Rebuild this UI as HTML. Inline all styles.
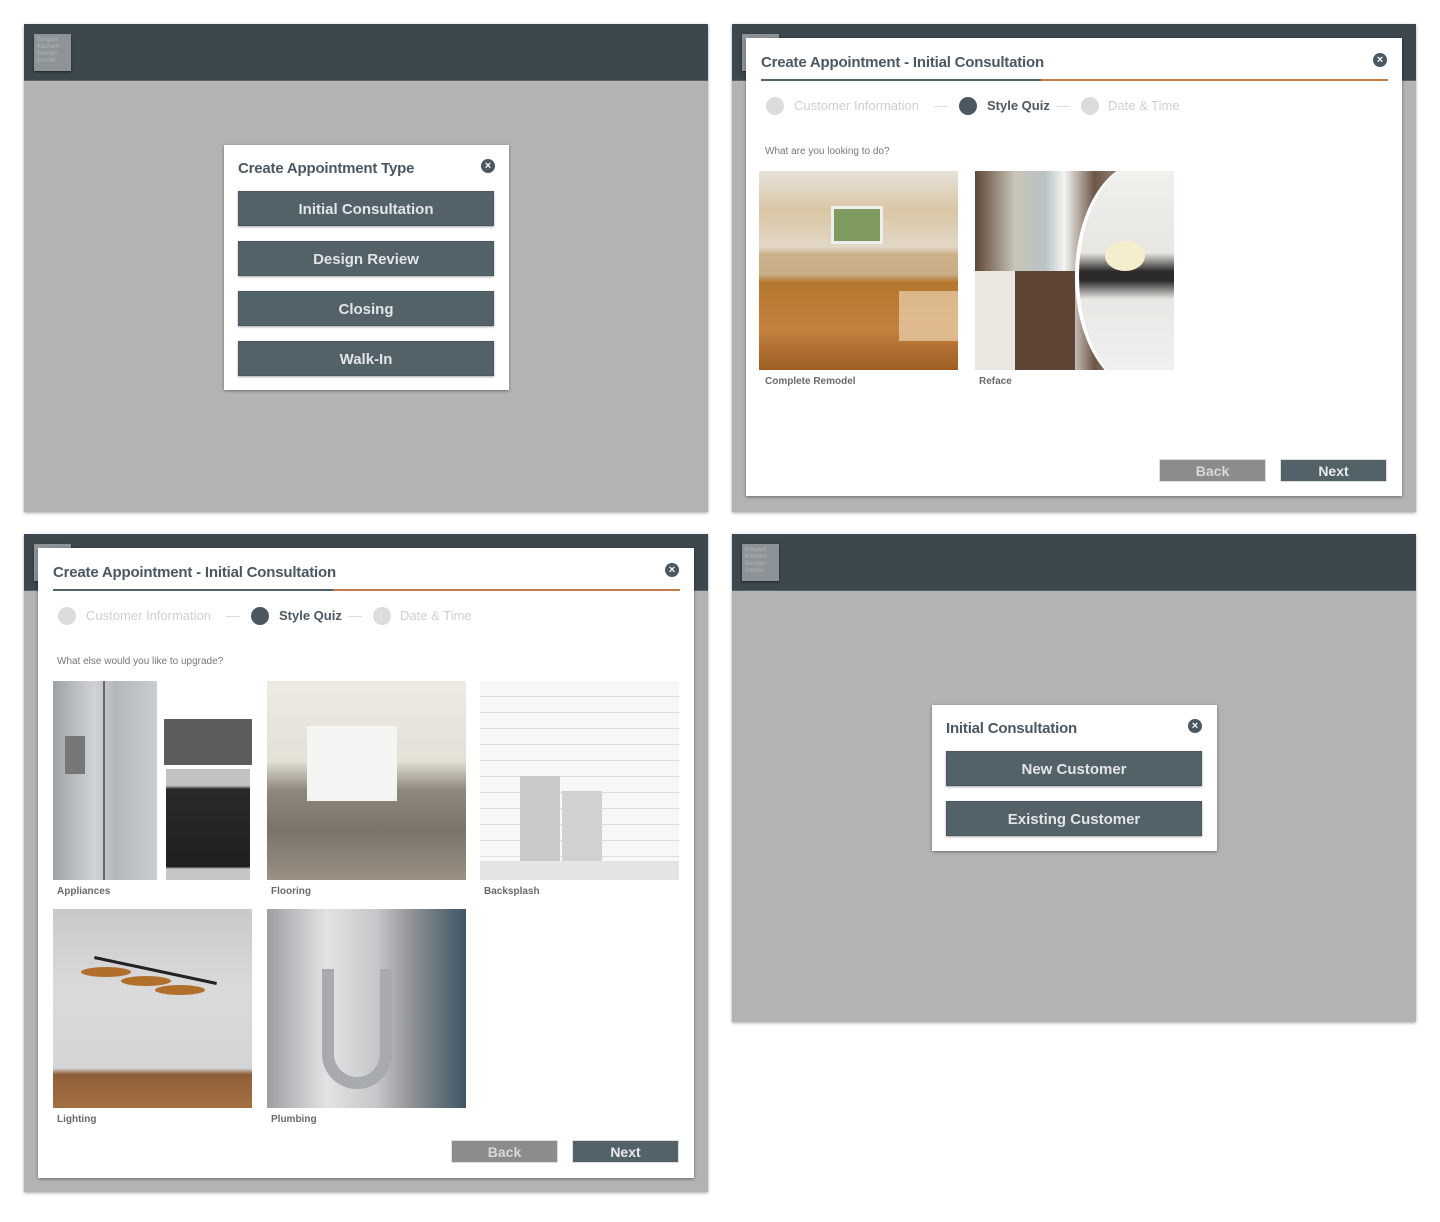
<!DOCTYPE html>
<html><head><meta charset="utf-8">
<style>
*{margin:0;padding:0;box-sizing:border-box}
body{width:1440px;height:1222px;background:#fff;position:relative;overflow:hidden;font-family:"Liberation Sans",sans-serif}
.a{position:absolute}
.panel{position:absolute;background:#b3b3b3;box-shadow:0 1px 3px rgba(0,0,0,.35)}
.hdr{position:absolute;left:0;top:0;right:0;height:57px;background:#3c474e;border-bottom:1px solid #5a646a}
.logo{position:absolute;left:10px;top:10px;width:37px;height:37px;background:#8d9396;box-shadow:0 1px 2px rgba(0,0,0,.5);color:#a6abae;font-size:6px;font-weight:bold;line-height:7px;padding:3px 0 0 3px}
.modal{position:absolute;background:#fff;box-shadow:0 1px 3px rgba(0,0,0,.4)}
.title{position:absolute;font-size:15px;font-weight:bold;color:#4b5862;white-space:nowrap;letter-spacing:-0.2px}
.close{position:absolute;width:14px;height:14px;border-radius:50%;background:#4b5862;color:#fff;font-size:11px;font-weight:bold;line-height:14px;text-align:center}
.btn{position:absolute;background:#536169;color:#e3e5e7;font-size:15px;font-weight:bold;text-align:center;box-shadow:0 1px 2px rgba(0,0,0,.35);border:1px solid #4a575f}
.sb{position:absolute;height:23px;font-size:14px;font-weight:bold;text-align:center;line-height:23px;border:1px solid #ddd}
.back{background:#8c8c8c;color:#d8d8d8}
.next{background:#536169;color:#e8eaeb}
.step{position:absolute;font-size:13px;color:#cfcfcf;white-space:nowrap;line-height:18px}
.dot{position:absolute;width:18px;height:18px;border-radius:50%;background:#dcdcdc}
.dash{position:absolute;height:1px;width:14px;background:#ddd}
.q{position:absolute;font-size:10px;color:#777;white-space:nowrap}
.lbl{position:absolute;font-size:10px;font-weight:bold;color:#6a6a6a;white-space:nowrap}
.img{position:absolute;width:199px;height:199px;overflow:hidden}
</style></head><body>

<!-- Panel 1 -->
<div class="panel" style="left:24px;top:24px;width:684px;height:488px">
 <div class="hdr"><div class="logo">Elegant<br>Kitchen<br>Design<br>Center</div></div>
 <div class="modal" style="left:200px;top:121px;width:285px;height:245px">
  <div class="title" style="left:14px;top:15px">Create Appointment Type</div>
  <div class="close" style="left:257px;top:14px">×</div>
  <div class="btn" style="left:14px;top:46px;width:256px;height:35px;line-height:35px">Initial Consultation</div>
  <div class="btn" style="left:14px;top:96px;width:256px;height:35px;line-height:35px">Design Review</div>
  <div class="btn" style="left:14px;top:146px;width:256px;height:35px;line-height:35px">Closing</div>
  <div class="btn" style="left:14px;top:196px;width:256px;height:35px;line-height:35px">Walk-In</div>
 </div>
</div>

<!-- Panel 2 -->
<div class="panel" style="left:732px;top:24px;width:684px;height:488px">
 <div class="hdr"><div class="logo">Elegant<br>Kitchen<br>Design<br>Center</div></div>
 <div class="modal" style="left:14px;top:14px;width:656px;height:458px">
  <div class="title" style="left:15px;top:16px">Create Appointment - Initial Consultation</div>
  <div class="close" style="left:627px;top:15px">×</div>
  <div class="a" style="left:15px;top:41px;width:280px;height:2px;background:#536169"></div>
  <div class="a" style="left:295px;top:41px;width:347px;height:2px;background:#c77b4a"></div>
  <div class="dot" style="left:20px;top:59px"></div><div class="step" style="left:48px;top:59px">Customer Information</div>
  <div class="dash" style="left:188px;top:68px"></div>
  <div class="dot" style="left:213px;top:59px;background:#4b5862"></div><div class="step" style="left:241px;top:59px;color:#4b5862;font-weight:bold">Style Quiz</div>
  <div class="dash" style="left:310px;top:68px"></div>
  <div class="dot" style="left:335px;top:59px"></div><div class="step" style="left:362px;top:59px">Date &amp; Time</div>
  <div class="q" style="left:19px;top:108px">What are you looking to do?</div>
  <div class="img" style="left:13px;top:133px;background:linear-gradient(180deg,#e6e2da 0%,#d9c6a4 20%,#e2d8c6 38%,#cbb08a 42%,#c9ae86 52%,#b5762f 56%,#c2813e 80%,#9e5d23 100%)">
   <div class="a" style="left:72px;top:35px;width:52px;height:38px;background:#7f9a5e;border:3px solid #eee"></div>
   <div class="a" style="left:140px;top:120px;width:59px;height:50px;background:rgba(255,245,225,.5)"></div>
  </div>
  <div class="img" style="left:229px;top:133px;background:linear-gradient(90deg,#5e4636 0%,#c8c4b8 20%,#b9c2c4 35%,#f4f3f0 45%,#6d5646 60%,#ecebe8 100%)">
   <div class="a" style="left:0;top:100px;width:100px;height:99px;background:linear-gradient(90deg,#eae7e0 0 40%,#5e4434 40% 100%)"></div>
   <div class="a" style="left:100px;top:-10px;width:140px;height:230px;border-radius:50%;border-left:4px solid #fff;background:linear-gradient(180deg,#f2f1ee 0%,#e8e6e2 40%,#2c2b2a 48%,#2c2b2a 52%,#e8e7e4 60%,#f3f3f2 100%)"></div>
   <div class="a" style="left:130px;top:70px;width:40px;height:30px;border-radius:50%;background:#f5eecc"></div>
  </div>
  <div class="lbl" style="left:19px;top:338px">Complete Remodel</div>
  <div class="lbl" style="left:233px;top:338px">Reface</div>
  <div class="sb back" style="left:413px;top:421px;width:107px">Back</div>
  <div class="sb next" style="left:534px;top:421px;width:107px">Next</div>
 </div>
</div>

<!-- Panel 3 -->
<div class="panel" style="left:24px;top:534px;width:684px;height:658px">
 <div class="hdr"><div class="logo">Elegant<br>Kitchen<br>Design<br>Center</div></div>
 <div class="modal" style="left:14px;top:14px;width:656px;height:630px">
  <div class="title" style="left:15px;top:16px">Create Appointment - Initial Consultation</div>
  <div class="close" style="left:627px;top:15px">×</div>
  <div class="a" style="left:15px;top:41px;width:280px;height:2px;background:#536169"></div>
  <div class="a" style="left:295px;top:41px;width:347px;height:2px;background:#c77b4a"></div>
  <div class="dot" style="left:20px;top:59px"></div><div class="step" style="left:48px;top:59px">Customer Information</div>
  <div class="dash" style="left:188px;top:68px"></div>
  <div class="dot" style="left:213px;top:59px;background:#4b5862"></div><div class="step" style="left:241px;top:59px;color:#4b5862;font-weight:bold">Style Quiz</div>
  <div class="dash" style="left:310px;top:68px"></div>
  <div class="dot" style="left:335px;top:59px"></div><div class="step" style="left:362px;top:59px">Date &amp; Time</div>
  <div class="q" style="left:19px;top:108px">What else would you like to upgrade?</div>
  <div class="img" style="left:15px;top:133px;background:#fff">
   <div class="a" style="left:0;top:0;width:104px;height:199px;background:linear-gradient(90deg,#9ea3a6,#cfd3d5 40%,#b3b8ba 60%,#c9cdcf 100%)">
    <div class="a" style="left:50px;top:0;width:2px;height:199px;background:#666"></div>
    <div class="a" style="left:12px;top:55px;width:20px;height:38px;background:#777"></div>
   </div>
   <div class="a" style="left:111px;top:38px;width:88px;height:46px;background:#5c5d5e"></div>
   <div class="a" style="left:113px;top:88px;width:84px;height:111px;background:linear-gradient(180deg,#c0c2c4 0%,#c0c2c4 15%,#2a2a2b 18%,#1f1f20 88%,#c4c6c8 90%)"></div>
  </div>
  <div class="img" style="left:229px;top:133px;background:linear-gradient(180deg,#eceae2 0%,#e3e1d6 40%,#8f877b 55%,#7b7469 75%,#9a9083 100%)">
   <div class="a" style="left:40px;top:45px;width:90px;height:75px;background:#f4f4f2"></div>
  </div>
  <div class="img" style="left:442px;top:133px;background:repeating-linear-gradient(180deg,#f7f7f7 0 15px,#dedede 15px 16px);">
   <div class="a" style="left:40px;top:95px;width:40px;height:85px;background:#c8c9ca"></div>
   <div class="a" style="left:82px;top:110px;width:40px;height:75px;background:#d0d1d2"></div>
   <div class="a" style="left:0;top:180px;width:199px;height:19px;background:#e4e4e4"></div>
  </div>
  <div class="lbl" style="left:19px;top:338px">Appliances</div>
  <div class="lbl" style="left:233px;top:338px">Flooring</div>
  <div class="lbl" style="left:446px;top:338px">Backsplash</div>
  <div class="img" style="left:15px;top:361px;background:linear-gradient(180deg,#c9c9cb 0%,#dadadc 40%,#d4d5d6 80%,#8e5f38 83%,#a46f43 100%)">
   <div class="a" style="left:40px;top:60px;width:125px;height:3px;background:#222;transform:rotate(12deg)"></div>
   <div class="a" style="left:28px;top:58px;width:50px;height:10px;border-radius:50%;background:#b0702c"></div>
   <div class="a" style="left:68px;top:67px;width:50px;height:10px;border-radius:50%;background:#b0702c"></div>
   <div class="a" style="left:102px;top:76px;width:50px;height:10px;border-radius:50%;background:#b0702c"></div>
  </div>
  <div class="img" style="left:229px;top:361px;background:linear-gradient(90deg,#9c9fa2 0%,#e2e3e4 30%,#c5c7c9 55%,#8a8d90 75%,#3d5566 100%)">
   <div class="a" style="left:55px;top:60px;width:70px;height:120px;border:12px solid #a7abae;border-top:none;border-radius:0 0 40px 40px"></div>
  </div>
  <div class="lbl" style="left:19px;top:566px">Lighting</div>
  <div class="lbl" style="left:233px;top:566px">Plumbing</div>
  <div class="sb back" style="left:413px;top:592px;width:107px">Back</div>
  <div class="sb next" style="left:534px;top:592px;width:107px">Next</div>
 </div>
</div>

<!-- Panel 4 -->
<div class="panel" style="left:732px;top:534px;width:684px;height:488px">
 <div class="hdr"><div class="logo">Elegant<br>Kitchen<br>Design<br>Center</div></div>
 <div class="modal" style="left:200px;top:171px;width:285px;height:146px">
  <div class="title" style="left:14px;top:15px">Initial Consultation</div>
  <div class="close" style="left:256px;top:14px">×</div>
  <div class="btn" style="left:14px;top:46px;width:256px;height:35px;line-height:35px">New Customer</div>
  <div class="btn" style="left:14px;top:96px;width:256px;height:35px;line-height:35px">Existing Customer</div>
 </div>
</div>

</body></html>
